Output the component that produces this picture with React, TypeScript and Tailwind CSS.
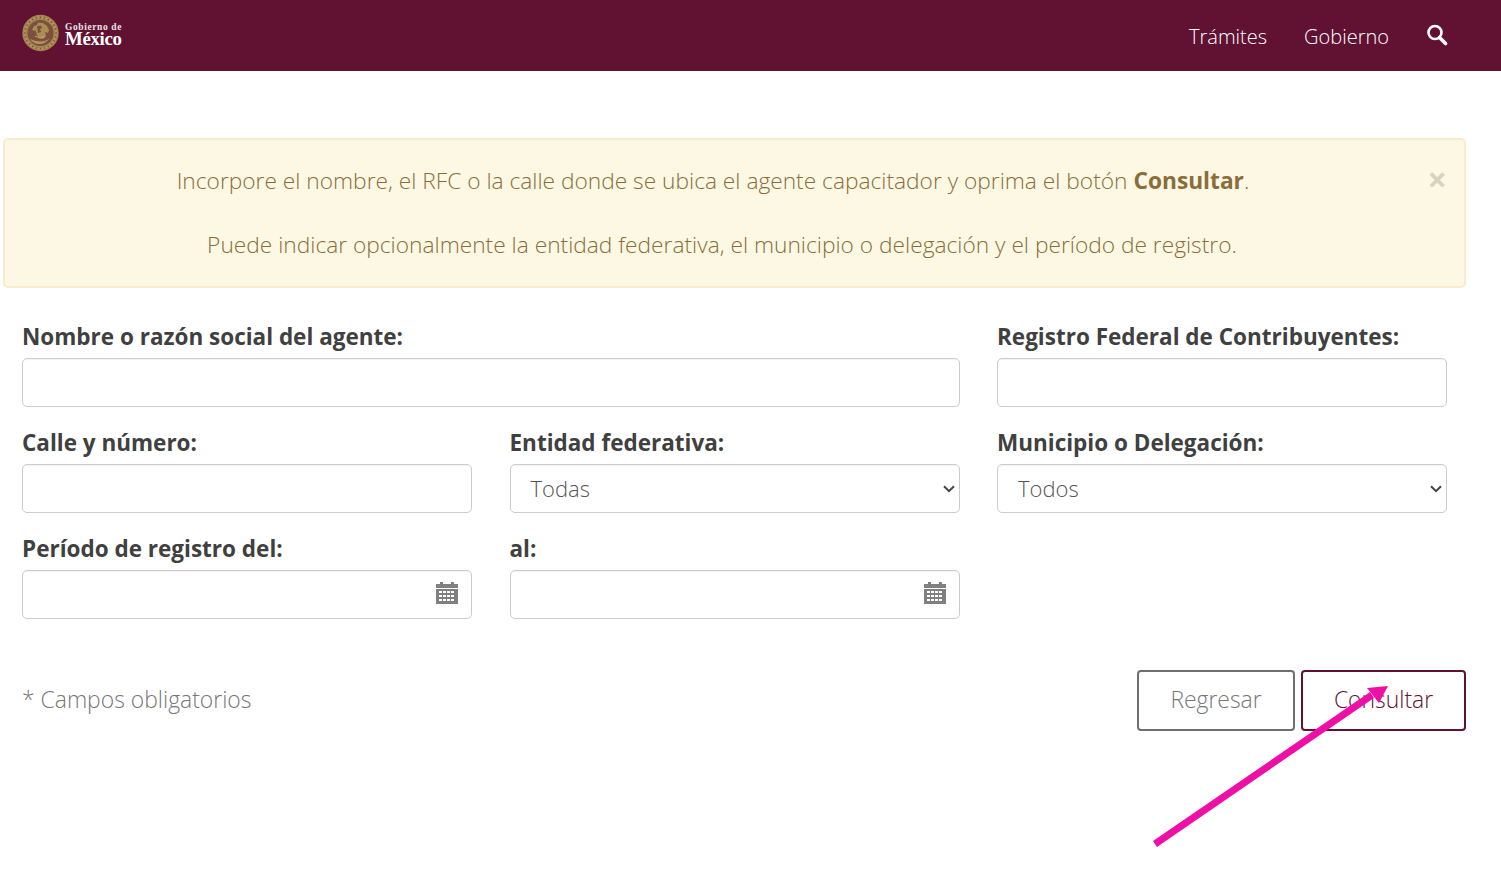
const inputCls = 'block w-full h-[49px] bg-white border border-[#ccc] rounded-[5px] shadow-[inset_0_1px_1px_rgba(0,0,0,0.05)]';
const labelCls = 'block h-[29px] mb-[7px] text-[22.5px] leading-[29px] font-bold text-[#404040] whitespace-nowrap';

function Seal() {
  const ticks = Array.from({ length: 48 }, (_, i) => (i * Math.PI * 2) / 48);
  return (
    <svg width="37" height="38" viewBox="0 0 37 38" className="shrink-0">
      <circle cx="18.5" cy="19" r="18.2" fill="#a2854f" />
      <circle cx="18.5" cy="19" r="13" fill="#7c4f3f" />
      {ticks.map((a, i) => (
        <circle key={i} cx={18.5 + Math.cos(a) * 15.6} cy={19 + Math.sin(a) * 15.6} r="0.8" fill={i % 2 ? '#c4a567' : '#80583f'} />
      ))}
      {/* eagle */}
      <path d="M16 8.5l5 .5 4 3 2 4-1 3-3-1 1 4-3 3-4-1-2-3-1-4-4-1 2-4 3-1z" fill="#ab8c55" />
      <path d="M15 12l4-.5 1 2.5-2 1 1 3-3 1z" fill="#7c4f3f" />
      <path d="M13 22l5 2 5-1.5" fill="none" stroke="#c4a567" strokeWidth="1" />
      {/* wreath */}
      <path d="M8 25c3 4.5 8 6 13 4.5 3-1 5-3 7-5.500-2.500 2-5.500 3.500-9 3.500-4.500 0-8-1-11-2.500z" fill="#b5965a" />
    </svg>
  );
}

function CalendarIcon() {
  return (
    <svg width="22" height="24" viewBox="0 0 22 24" className="absolute right-[13px] top-[10px]" fill="#808080">
      <path d="M0 3h4V1h3v2h8V1h3v2h4v4H0z" />
      <path fillRule="evenodd" d="M0 8h22v15H0zM3 10v2h3v-2zm4 0v2h3v-2zm4 0v2h3v-2zm4 0v2h3v-2zM3 14v2h3v-2zm4 0v2h3v-2zm4 0v2h3v-2zm4 0v2h3v-2zM3 18v2h3v-2zm4 0v2h3v-2zm4 0v2h3v-2zm4 0v2h3v-2z" />
    </svg>
  );
}

function SelectBox({ value }: { value: string }) {
  return (
    <div className={`${inputCls} flex items-center justify-between pl-5 pr-[4px] text-[22px] font-light text-[#555]`}>
      <span>{value}</span>
      <svg width="12" height="8" viewBox="0 0 12 8" fill="none" stroke="#444" strokeWidth="2">
        <path d="M1 1.2l5 5 5-5" />
      </svg>
    </div>
  );
}

function DateBox() {
  return (
    <div className={`${inputCls} relative`}>
      <CalendarIcon />
    </div>
  );
}

export default function App() {
  return (
    <div className="relative min-h-[871px] bg-white font-['Open_Sans',sans-serif] overflow-hidden">
      <nav className="h-[71px] bg-[#611232] flex items-center justify-between pl-[22px] pr-[53px]">
        <div className="flex items-start gap-[6px] -mt-[5px]">
          <Seal />
          <div className="text-white font-['Liberation_Serif',serif] mt-[9px]">
            <div className="text-[9.5px] leading-[9px] font-bold tracking-[0.6px] text-[#e8e2e4]">Gobierno de</div>
            <div className="text-[18.8px] leading-[13px] font-bold tracking-[-0.3px]">México</div>
          </div>
        </div>
        <div className="flex items-center text-white text-[20px] font-light gap-[37px] pt-[2px]">
          <span>Trámites</span>
          <span>Gobierno</span>
          <svg width="22" height="22" viewBox="0 0 22 22" className="mb-[4px]" fill="none" stroke="#fff">
            <circle cx="9" cy="8.5" r="6.5" strokeWidth="2.6" />
            <path d="M13.5 13.5l6 6" strokeWidth="3.6" strokeLinecap="round" />
          </svg>
        </div>
      </nav>

      <div className="relative ml-[3px] mr-[35px] mt-[67px] h-[150px] bg-[#fcf8e3] border-2 border-[#faebcc] rounded-[5px] text-[#8a6d3b] font-light text-[22.72px] text-center pt-[25px] leading-[32px]">
        <p className="pr-[43px]">
          Incorpore el nombre, el RFC o la calle donde se ubica el agente capacitador y oprima el botón <b className="font-bold">Consultar</b>.
        </p>
        <p className="mt-[32px] pr-[25px]">
          Puede indicar opcionalmente la entidad federativa, el municipio o delegación y el período de registro.
        </p>
        <span className="absolute right-[17px] top-[23px] font-bold text-[34px] leading-[32px] text-[#d9d3bd]">×</span>
      </div>

      <form className="grid grid-cols-[450px_450px_450px] gap-x-[37.5px] gap-y-[21px] pl-[22px] mt-[34px]">
        <div className="col-span-2">
          <label className={labelCls}>Nombre o razón social del agente:</label>
          <div className={inputCls} />
        </div>
        <div>
          <label className={labelCls}>Registro Federal de Contribuyentes:</label>
          <div className={inputCls} />
        </div>
        <div>
          <label className={labelCls}>Calle y número:</label>
          <div className={inputCls} />
        </div>
        <div>
          <label className={labelCls}>Entidad federativa:</label>
          <SelectBox value="Todas" />
        </div>
        <div>
          <label className={labelCls}>Municipio o Delegación:</label>
          <SelectBox value="Todos" />
        </div>
        <div>
          <label className={labelCls}>Período de registro del:</label>
          <DateBox />
        </div>
        <div>
          <label className={labelCls}>al:</label>
          <DateBox />
        </div>
      </form>

      <div className="flex items-center justify-between pl-[22px] pr-[35px] mt-[51px]">
        <span className="text-[22.9px] font-light text-[#777] -mt-[1px]">* Campos obligatorios</span>
        <div className="flex gap-[6px]">
          <button className="w-[158px] h-[61px] border-2 border-[#6f6f6f] rounded-[4px] bg-white text-[22.9px] font-light text-[#777]">Regresar</button>
          <button className="w-[165px] h-[61px] border-2 border-[#611232] rounded-[4px] bg-white text-[22.9px] font-light text-[#611232]">Consultar</button>
        </div>
      </div>

      <svg width="1501" height="871" className="absolute inset-0 pointer-events-none">
        <path d="M1155 844L1372 695" stroke="#ee0fa6" strokeWidth="7" fill="none" />
        <path d="M1388 686L1367 688L1379 703Z" fill="#ee0fa6" />
      </svg>
    </div>
  );
}
